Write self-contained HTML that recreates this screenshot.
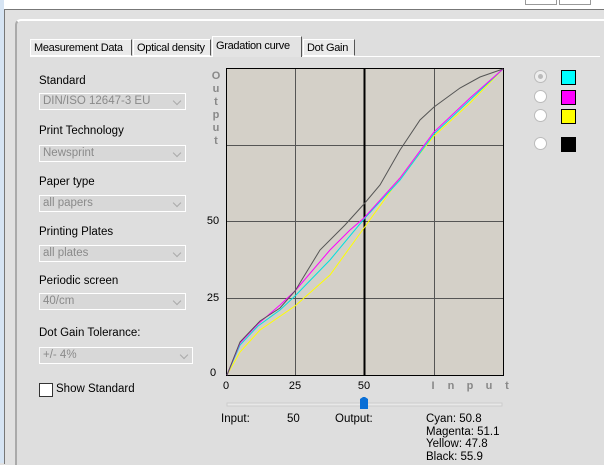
<!DOCTYPE html>
<html><head><style>
body{margin:0;width:604px;height:463px;overflow:hidden;background:#e1e1e1;font-family:"Liberation Sans",sans-serif;font-size:11px;color:#000;position:relative}
.a{position:absolute;white-space:nowrap}
.lbl{position:absolute;left:39px;font-size:11.5px;white-space:nowrap}
.cb{position:absolute;left:39px;width:147px;height:17px;border:1px solid #fff;background:#d8d8d8;color:#8a8a8a;box-sizing:border-box;font-size:11.5px;padding:1px 0 0 3px;white-space:nowrap}
.cb:after{content:"";position:absolute;right:5px;top:4px;width:5px;height:5px;border-right:1px solid #aaa;border-bottom:1px solid #aaa;transform:rotate(45deg)}
.tab{position:absolute;top:39px;height:17px;background:#eaeaea;border:1px solid #fff;border-right:1px solid #555;font-size:11px;letter-spacing:-0.3px;padding:2px 0 0 3px;box-sizing:border-box;white-space:nowrap;overflow:hidden}
.rad{position:absolute;left:534px;width:11px;height:11px;border-radius:50%;background:#fff;border:1px solid #bbb}
.sw{position:absolute;left:561px;width:13px;height:13px;border:1px solid #000}
</style></head><body>
<div class="a" style="left:0;top:0;width:604px;height:9px;background:#fff"></div>
<div class="a" style="left:525px;top:0;width:30px;height:4px;border:1px solid #999;border-top:0"></div>
<div class="a" style="left:559px;top:0;width:30px;height:4px;border:1px solid #999;border-top:0"></div>
<div class="a" style="left:0;top:0;width:4px;height:463px;background:#d6e4f3"></div>
<div class="a" style="left:4px;top:9px;width:600px;height:454px;border-left:1px solid #777;border-top:1px solid #777;background:#e1e1e1"></div>
<div class="a" style="left:15px;top:19px;width:589px;height:444px;border-left:2px solid #aaa;border-top:2px solid #fff;border-radius:6px 0 0 0;background:#dedede"></div>
<div class="a" style="left:30px;top:56px;width:570px;height:1px;background:#fff"></div>
<div class="tab" style="left:30px;width:102px">Measurement Data</div>
<div class="tab" style="left:133px;width:78px">Optical density</div>
<div class="tab" style="left:212px;top:36px;height:21px;width:90px;background:#e3e3e3;border-bottom:0;padding-top:3px">Gradation curve</div>
<div class="tab" style="left:303px;width:52px">Dot Gain</div>

<div class="lbl" style="top:75px">Standard</div><div class="cb" style="top:93px">DIN/ISO 12647-3 EU</div>
<div class="lbl" style="top:125px">Print Technology</div><div class="cb" style="top:145px">Newsprint</div>
<div class="lbl" style="top:176px">Paper type</div><div class="cb" style="top:195px">all papers</div>
<div class="lbl" style="top:226px">Printing Plates</div><div class="cb" style="top:245px">all plates</div>
<div class="lbl" style="top:275px">Periodic screen</div><div class="cb" style="top:293px">40/cm</div>
<div class="lbl" style="top:327px">Dot Gain Tolerance:</div><div class="cb" style="top:347px;width:154px">+/- 4%</div>
<div class="a" style="left:39px;top:383px;width:12px;height:12px;border:1px solid #333;background:#fff"></div>
<div class="lbl" style="left:56px;top:383px">Show Standard</div>

<svg class="a" style="left:0;top:0" width="604" height="463">
<g font-family="Liberation Sans" font-size="11" font-weight="bold" fill="#888" text-anchor="middle">
<text x="216" y="79">O</text><text x="216" y="92">u</text><text x="216" y="105">t</text><text x="216" y="118">p</text><text x="216" y="131">u</text><text x="216" y="144">t</text>
<text x="433" y="389">I</text><text x="451" y="389">n</text><text x="470" y="389">p</text><text x="489" y="389">u</text><text x="507" y="389">t</text>
</g>
<rect x="226.5" y="68.5" width="277" height="307" fill="#d4d0c8" stroke="#000"/>
<g stroke="#555" stroke-width="1">
<line x1="295.5" y1="69" x2="295.5" y2="375"/><line x1="434.5" y1="69" x2="434.5" y2="375"/>
<line x1="227" y1="145.5" x2="503" y2="145.5"/><line x1="227" y1="221.5" x2="503" y2="221.5"/><line x1="227" y1="298.5" x2="503" y2="298.5"/>
</g>
<line x1="364.5" y1="69" x2="364.5" y2="375" stroke="#000" stroke-width="2"/>
<g fill="none" stroke-width="1">
<polyline stroke="#ffff00" points="227,375 240,352 260,330 295,306 330,275 364,228 400,178 434,136 470,103 503,69"/>
<polyline stroke="#00e0e0" points="227,375 240,345 258,326 280,310 295,296 330,260 364,219 400,180 434,134 470,100 503,69"/>
<polyline stroke="#ff00ff" points="227,375 240,343 258,324 280,305 295,291 330,250 350,230 364,218 400,178 434,132 470,98 503,69"/>
<polyline stroke="#555" points="227,375 240,342 260,321 280,308 295,291 320,250 345,225 364,204 380,185 400,150 420,120 434,107 460,88 480,77 503,69"/>
</g>
<g font-family="Liberation Sans" font-size="11" text-anchor="middle">
<text x="213" y="224">50</text><text x="213" y="301">25</text><text x="213" y="376">0</text>
<text x="226" y="389">0</text><text x="295" y="389">25</text><text x="364" y="389">50</text>
</g>
<rect x="227" y="403" width="275" height="3" fill="#e8e8e8" stroke="#ccc"/>
<path d="M360,399 l3,-2 h2 l3,2 v10 h-8z" fill="#0a6fd6"/>
</svg>
<div class="rad" style="top:70px;background:#eee"><div style="margin:3px;width:5px;height:5px;border-radius:50%;background:#bbb"></div></div>
<div class="rad" style="top:90px"></div><div class="rad" style="top:109px"></div><div class="rad" style="top:137px"></div>
<div class="sw" style="top:70px;background:#0ff"></div>
<div class="sw" style="top:90px;background:#f0f"></div>
<div class="sw" style="top:109px;background:#ff0"></div>
<div class="sw" style="top:137px;background:#000"></div>
<div class="a" style="left:221px;top:413px;font-size:11.5px">Input:</div>
<div class="a" style="left:287px;top:413px;font-size:11.5px">50</div>
<div class="a" style="left:335px;top:413px;font-size:11.5px">Output:</div>
<div class="a" style="left:426px;top:413px;font-size:11.5px;line-height:12.5px">Cyan: 50.8<br>Magenta: 51.1<br>Yellow: 47.8<br>Black: 55.9</div>
</body></html>
